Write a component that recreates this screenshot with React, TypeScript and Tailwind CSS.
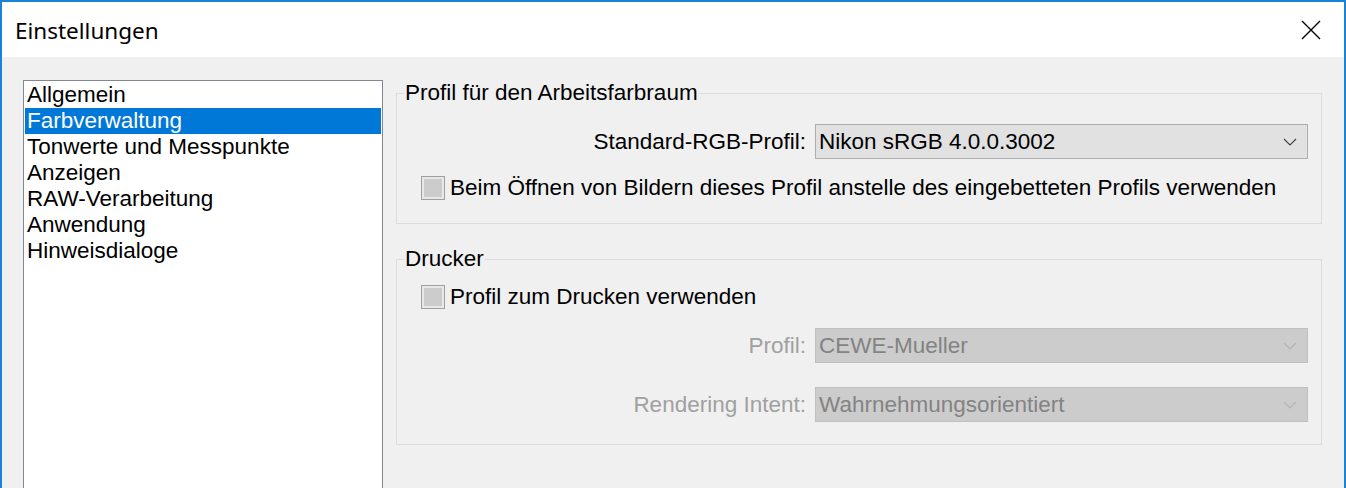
import { ReactNode } from "react";

const pages = [
  "Allgemein",
  "Farbverwaltung",
  "Tonwerte und Messpunkte",
  "Anzeigen",
  "RAW-Verarbeitung",
  "Anwendung",
  "Hinweisdialoge",
];

function Chevron({ disabled }: { disabled?: boolean }) {
  return (
    <svg width="14" height="8" viewBox="0 0 14 8" className="shrink-0">
      <path
        d="M1 1 L7 7 L13 1"
        fill="none"
        stroke={disabled ? "#b4b4b4" : "#404040"}
        strokeWidth="1.1"
      />
    </svg>
  );
}

function Select({ value, disabled }: { value: string; disabled?: boolean }) {
  return (
    <div
      className={
        disabled
          ? "w-[493px] h-[35px] flex items-center justify-between pl-[3px] pr-[10px] border border-[#bfbfbf] bg-[#cccccc] text-[#838383]"
          : "w-[493px] h-[35px] flex items-center justify-between pl-[3px] pr-[10px] border border-[#adadad] bg-[#e1e1e1] text-black"
      }
    >
      <span>{value}</span>
      <Chevron disabled={disabled} />
    </div>
  );
}

function Row({ label, disabled, children }: { label: string; disabled?: boolean; children: ReactNode }) {
  return (
    <div className="flex items-center justify-end gap-[9px] pr-[13px]">
      <span className={disabled ? "text-[#a0a0a0]" : "text-black"}>{label}</span>
      {children}
    </div>
  );
}

function Check({ label }: { label: string }) {
  return (
    <div className="flex items-center gap-[5px] pl-[24px]">
      <div className="w-[24px] h-[24px] border border-[#a0a0a0] bg-[#e8e8e8] p-[2px]">
        <div className="w-full h-full bg-[#cccccc]" />
      </div>
      <span>{label}</span>
    </div>
  );
}

function Group({ title, children }: { title: string; children: ReactNode }) {
  return (
    <fieldset className="border border-[#dcdcdc] pb-[22px]">
      <legend className="ml-[7px] px-[1px] leading-[26px]">{title}</legend>
      {children}
    </fieldset>
  );
}

export default function App() {
  return (
    <div className="w-[1346px] h-[488px] overflow-hidden border-t-2 border-x-2 border-[#1883d7] flex flex-col bg-[#f0f0f0]">
      <div className="h-[55px] shrink-0 bg-white flex items-center justify-between pl-[13px] pr-[23px]">
        <span className="text-[22.5px] text-black font-['Noto_Sans',sans-serif] mt-[2px]">Einstellungen</span>
        <svg width="20" height="20" viewBox="0 0 20 20">
          <path d="M1 1 L19 19 M19 1 L1 19" stroke="#000" strokeWidth="1.4" />
        </svg>
      </div>

      <div className="flex-1 flex pt-[23px] pl-[21px] pr-[22px] gap-[13px] font-['Liberation_Sans',Arial,sans-serif] text-[22.5px] leading-[26px] text-black">
        <div className="w-[360px] shrink-0 bg-white border border-[#828790] p-[1px] h-[420px]">
          {pages.map((p) => (
            <div
              key={p}
              className={
                p === "Farbverwaltung"
                  ? "h-[26px] pl-[2px] bg-[#0078d7] text-white whitespace-nowrap"
                  : "h-[26px] pl-[2px] whitespace-nowrap"
              }
            >
              {p}
            </div>
          ))}
        </div>

        <div className="flex-1 flex flex-col gap-[22px]">
          <Group title="Profil für den Arbeitsfarbraum">
            <div className="mt-[18px]">
              <Row label="Standard-RGB-Profil:">
                <Select value="Nikon sRGB 4.0.0.3002" />
              </Row>
            </div>
            <div className="mt-[16px]">
              <Check label="Beim Öffnen von Bildern dieses Profil anstelle des eingebetteten Profils verwenden" />
            </div>
          </Group>

          <Group title="Drucker">
            <div className="mt-[12px]">
              <Check label="Profil zum Drucken verwenden" />
            </div>
            <div className="mt-[18px]">
              <Row label="Profil:" disabled>
                <Select value="CEWE-Mueller" disabled />
              </Row>
            </div>
            <div className="mt-[24px]">
              <Row label="Rendering Intent:" disabled>
                <Select value="Wahrnehmungsorientiert" disabled />
              </Row>
            </div>
          </Group>
        </div>
      </div>
    </div>
  );
}
